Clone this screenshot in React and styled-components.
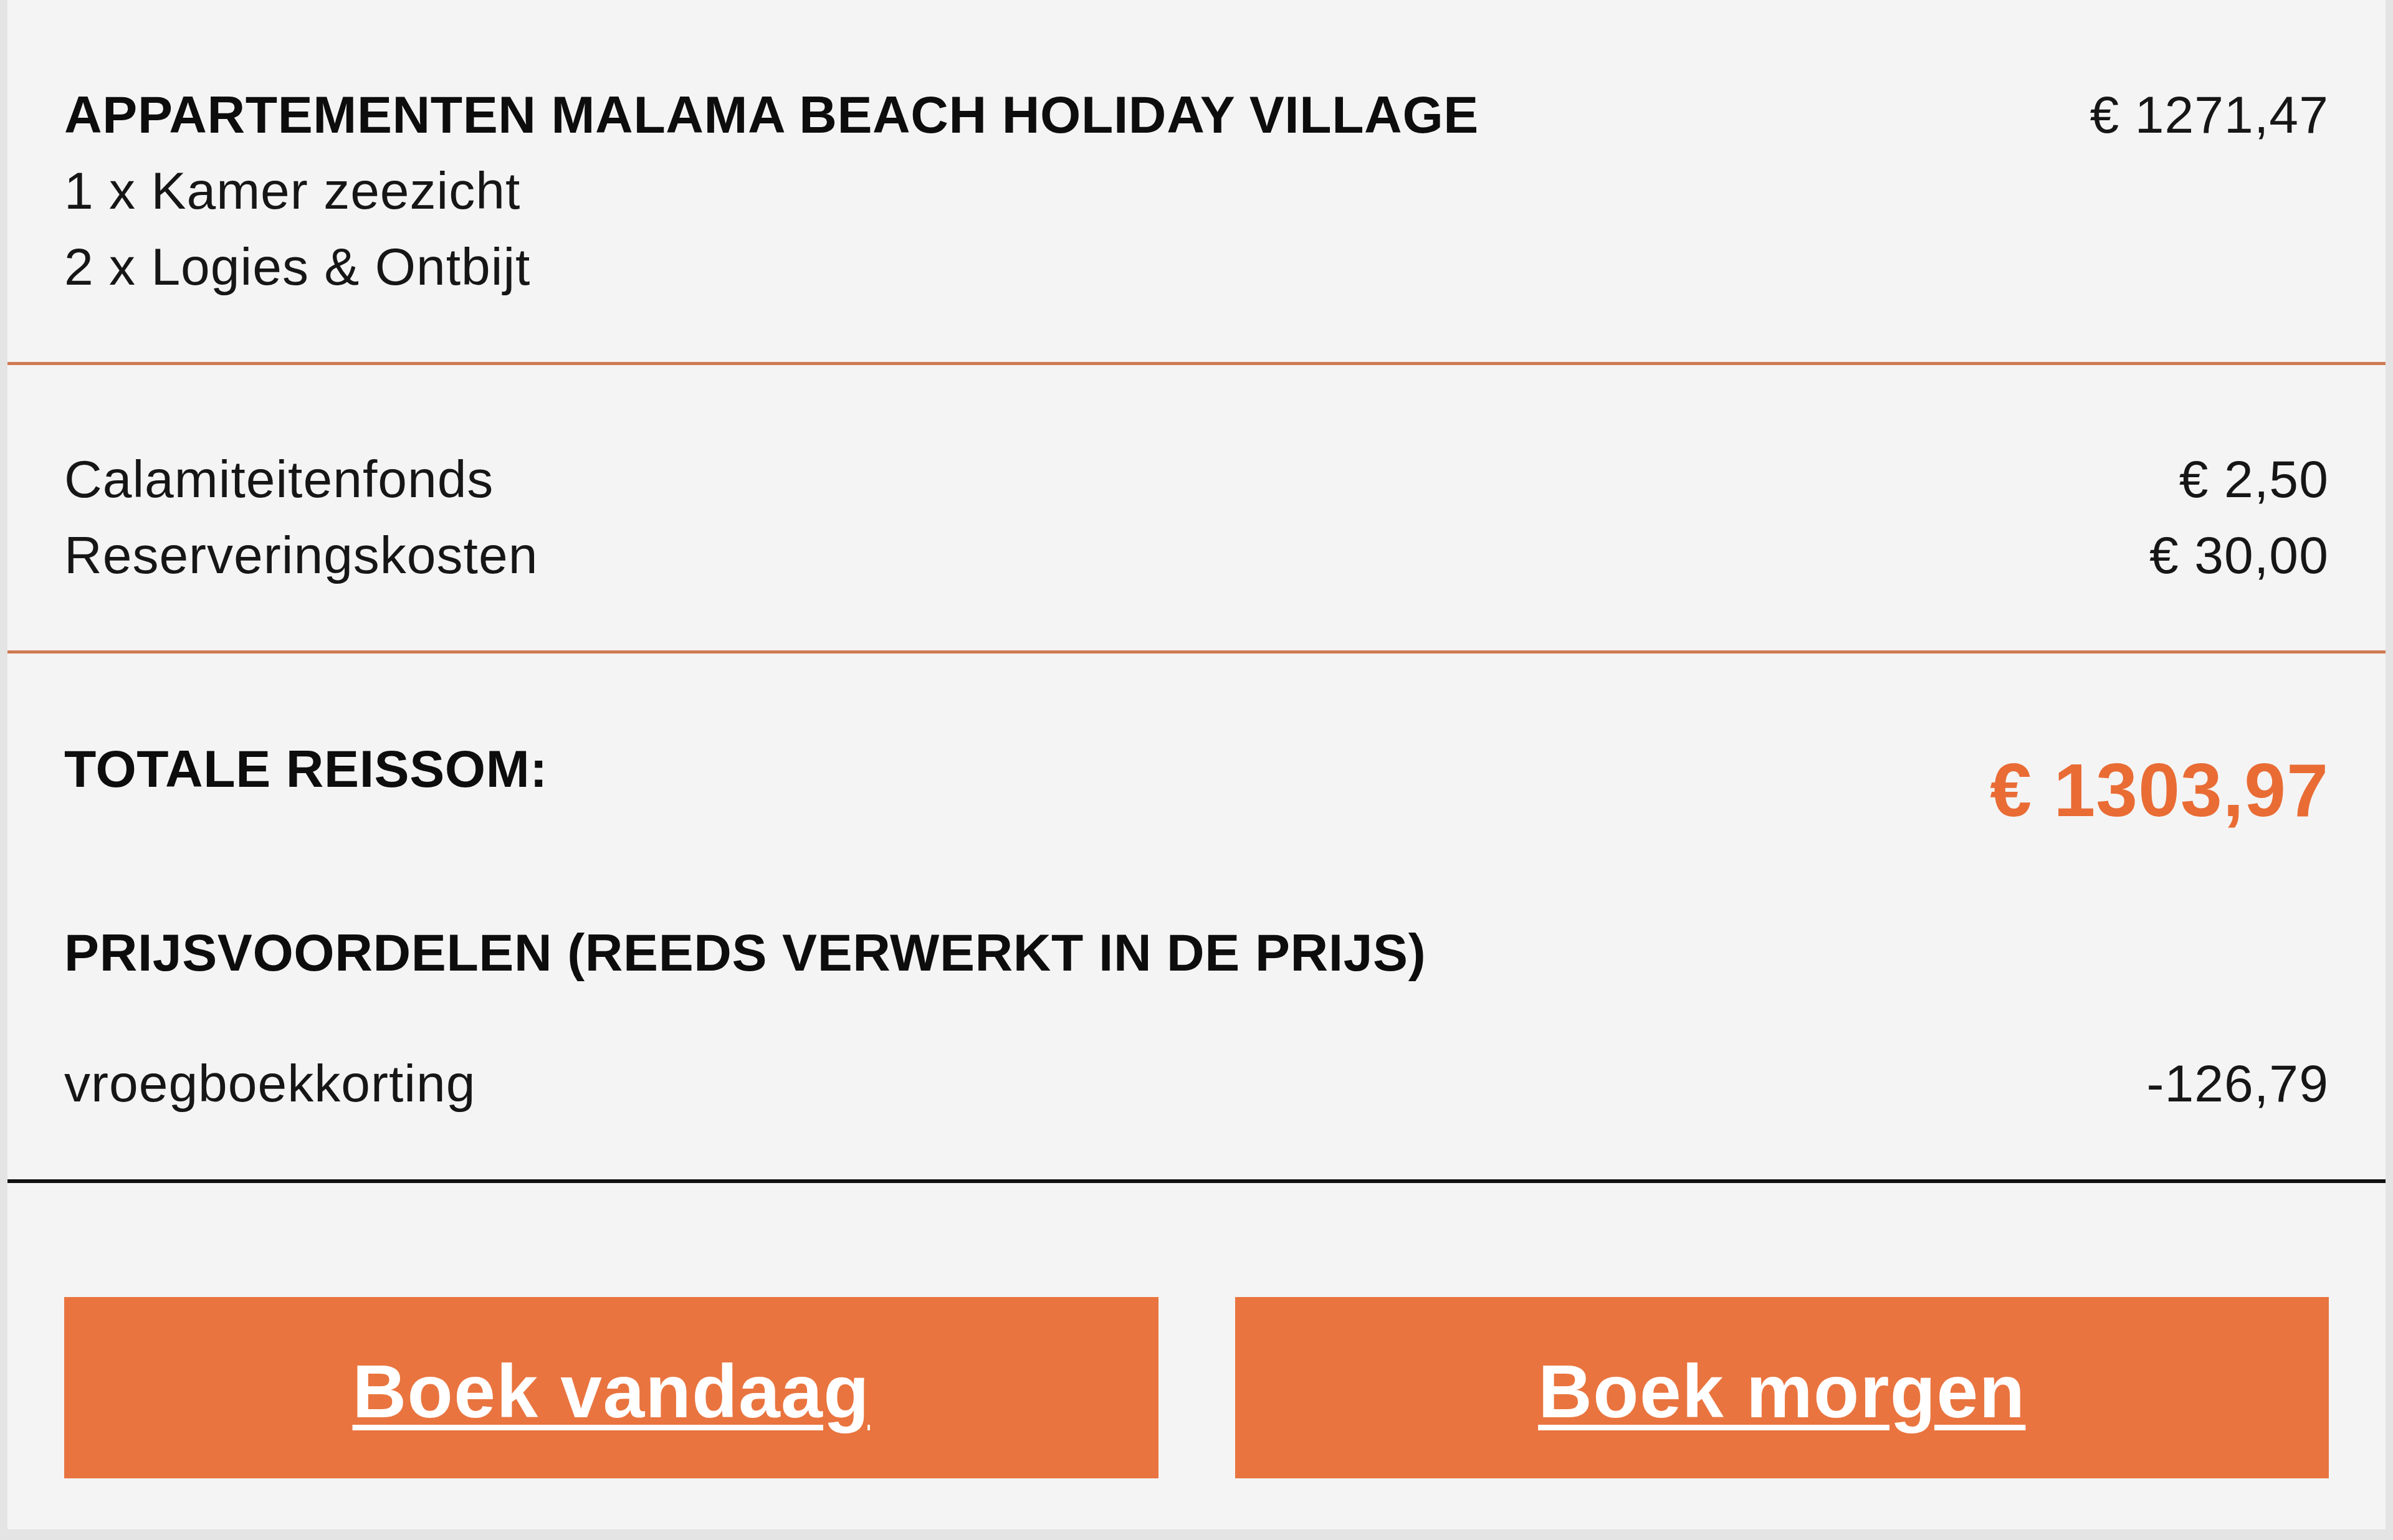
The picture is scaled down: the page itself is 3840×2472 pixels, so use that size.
import React from 'react';
import styled, { createGlobalStyle } from 'styled-components';

const GlobalStyle = createGlobalStyle`
  html, body {
    margin: 0;
    padding: 0;
    background: #e4e4e4;
  }
  body {
    font-family: "Liberation Sans", Arial, Helvetica, sans-serif;
    color: #111;
  }
`;

const items = [
  { label: '1 x Kamer zeezicht' },
  { label: '2 x Logies & Ontbijt' },
];

const costs = [
  { label: 'Calamiteitenfonds', amount: '€ 2,50' },
  { label: 'Reserveringskosten', amount: '€ 30,00' },
];

const App = () => (
  <>
    <GlobalStyle />
    <Page>
      <Card>
        <Section top={123} bottom={92}>
          <Row>
            <Title>APPARTEMENTEN MALAMA BEACH HOLIDAY VILLAGE</Title>
            <Amount>€ 1271,47</Amount>
          </Row>
          {items.map((item) => (
            <Row key={item.label}>
              <Text>{item.label}</Text>
            </Row>
          ))}
        </Section>
        <Divider color="#d07a52" size={5} />
        <Section top={122} bottom={92}>
          {costs.map((cost) => (
            <Row key={cost.label}>
              <Text>{cost.label}</Text>
              <Amount>{cost.amount}</Amount>
            </Row>
          ))}
        </Section>
        <Divider color="#d07a52" size={5} />
        <Section top={124} bottom={93}>
          <TotalRow>
            <Title>TOTALE REISSOM:</Title>
            <TotalAmount>€ 1303,97</TotalAmount>
          </TotalRow>
          <SubTitle>PRIJSVOORDELEN (REEDS VERWERKT IN DE PRIJS)</SubTitle>
          <Row>
            <Text>vroegboekkorting</Text>
            <Amount>-126,79</Amount>
          </Row>
        </Section>
        <Divider color="#111" size={6} />
        <Buttons>
          <BookButton href="#">Boek vandaag</BookButton>
          <BookButton href="#">Boek morgen</BookButton>
        </Buttons>
      </Card>
    </Page>
  </>
);

const Page = styled.div`
  width: 3840px;
  padding: 0 12px 17px;
  box-sizing: border-box;
  background: #e4e4e4;
`;

const Card = styled.div`
  background: #f4f4f4;
  display: flex;
  flex-direction: column;
`;

const Section = styled.div`
  padding: ${(props) => props.top}px 91px ${(props) => props.bottom}px;
  display: flex;
  flex-direction: column;
`;

const Row = styled.div`
  display: flex;
  justify-content: space-between;
  align-items: flex-start;
  font-size: 84px;
  line-height: 122px;
`;

const Title = styled.span`
  font-weight: 700;
  font-size: 84px;
  line-height: 122px;
  letter-spacing: 0.6px;
  color: #0d0d0d;
`;

const Text = styled.span`
  font-size: 84px;
  line-height: 122px;
  letter-spacing: 1px;
  color: #161616;
`;

const Amount = styled.span`
  font-size: 84px;
  line-height: 122px;
  letter-spacing: 1.1px;
  color: #161616;
  white-space: nowrap;
`;

const TotalRow = styled.div`
  display: flex;
  justify-content: space-between;
  align-items: flex-start;
`;

const TotalAmount = styled.span`
  margin-top: 26px;
  font-size: 120px;
  line-height: 138px;
  font-weight: 700;
  letter-spacing: 1.1px;
  color: #e96c35;
  white-space: nowrap;
`;

const SubTitle = styled.div`
  margin: 131px 0 88px;
  font-weight: 700;
  font-size: 84px;
  line-height: 122px;
  letter-spacing: 0.6px;
  color: #0d0d0d;
`;

const Divider = styled.div`
  height: ${(props) => props.size}px;
  background: ${(props) => props.color};
`;

const Buttons = styled.div`
  display: grid;
  grid-template-columns: 1fr 1fr;
  column-gap: 123px;
  padding: 183px 91px 82px;
`;

const BookButton = styled.a`
  display: flex;
  align-items: center;
  justify-content: center;
  height: 291px;
  background: #e9743f;
  color: #fff;
  font-weight: 700;
  font-size: 120px;
  letter-spacing: 1.4px;
  padding-top: 10px;
  box-sizing: border-box;
  text-decoration: underline;
  text-decoration-thickness: 9px;
  text-underline-offset: 12px;
`;

export default App;
